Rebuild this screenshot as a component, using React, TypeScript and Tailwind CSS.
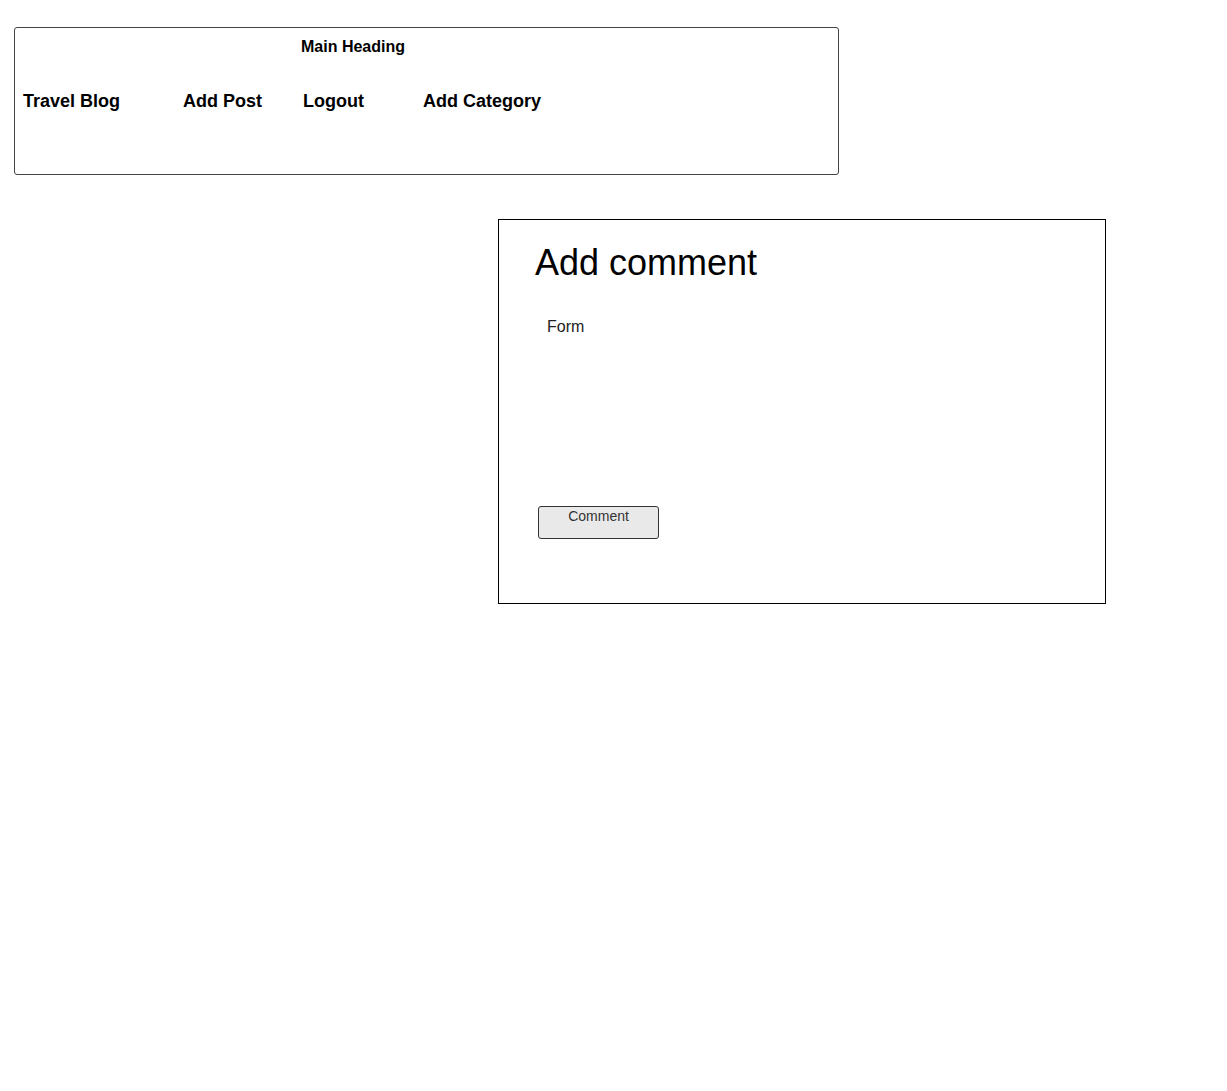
export default function App() {
  const nav = [
    { label: 'Travel Blog', w: 'w-[160px]' },
    { label: 'Add Post', w: 'w-[120px]' },
    { label: 'Logout', w: 'w-[120px]' },
    { label: 'Add Category', w: 'w-[140px]' },
  ]

  return (
    <div className="min-h-[1091px] bg-white text-black font-['Liberation_Sans',Arial,sans-serif]">
      <div className="pt-[27px] pl-[14px]">
        {/* header wireframe */}
        <div className="w-[825px] h-[148px] border border-[#444] rounded-[3px]">
          <div className="pt-[9px] pl-[286px] h-[29px] text-[16px] leading-[20px] font-bold">
            Main Heading
          </div>
          <div className="flex mt-[31px] pl-[8px]">
            {nav.map((item) => (
              <div key={item.label} className={`${item.w} text-[18px] leading-[26px] font-bold`}>
                {item.label}
              </div>
            ))}
          </div>
        </div>
      </div>

      {/* comment box */}
      <div className="mt-[44px] ml-[498px] w-[608px] h-[385px] border border-black">
        <div className="pl-[36px] pt-[21px] text-[36px] leading-[44px]">Add comment</div>
        <div className="pl-[48px] pt-[32px] text-[16px] leading-[20px] text-[#222]">Form</div>
        <div className="pl-[39px] pt-[167px]">
          <button className="w-[121px] h-[33px] bg-[#e9e9e9] border border-[#333] rounded-[3px] text-[14px] leading-[18px] text-[#333] pb-[12px]">
            Comment
          </button>
        </div>
      </div>
    </div>
  )
}
